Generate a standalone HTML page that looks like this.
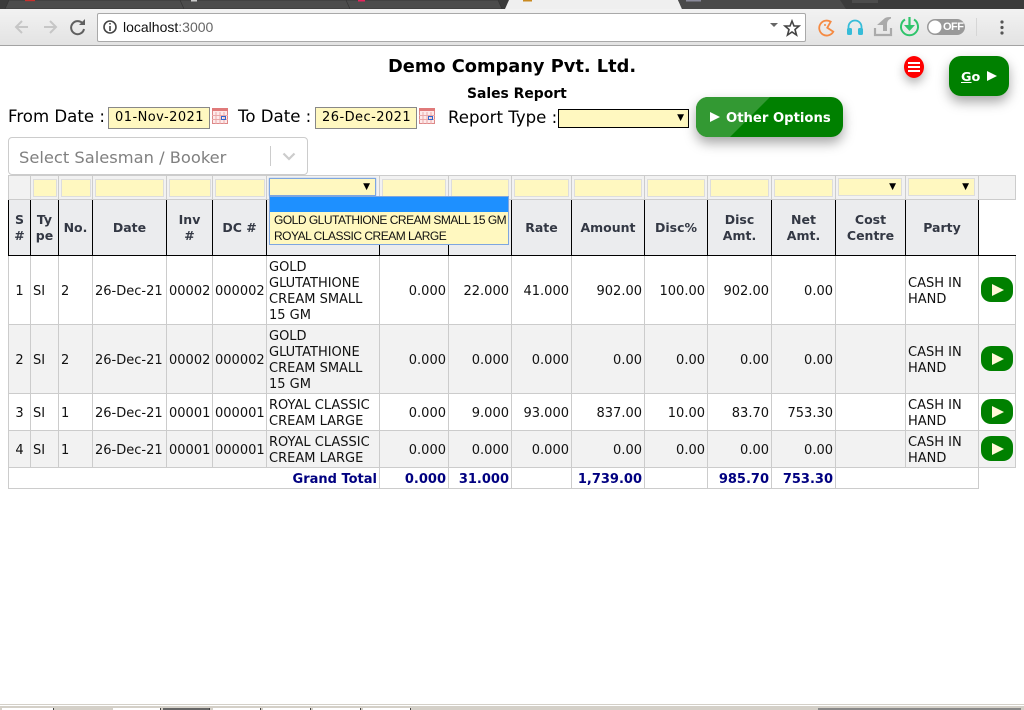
<!DOCTYPE html>
<html><head><meta charset="utf-8"><title>Sales Report</title>
<style>
html,body{margin:0;padding:0;background:#fff;width:1024px;height:710px;overflow:hidden}
body{font-family:"DejaVu Sans","Liberation Sans",sans-serif;color:#000;position:relative}
.a{position:absolute;white-space:nowrap}
table{position:absolute;left:8px;top:175px;border-collapse:collapse;table-layout:fixed;width:1008px;font-size:13px;color:#111}
td,th{border:1px solid #ccc;padding:0 2px;overflow:hidden;line-height:16px}
tr.f td{background:#f2f2f2;height:23px;padding:0}
tr.h th{background:#ebecee;border:1px solid #000;border-top:1px solid #ccc;height:55px;font-size:12.5px;color:#333844;padding:0 1px;font-weight:bold}
tr.h th.x{background:#fff;border:none;border-left:1px solid #000;border-bottom:1px solid #000}
tr.r td{height:64px;padding-top:4px}
tr.s td{height:32px;padding-top:4px}
tr.g td{background:#f2f2f2}
td.n{text-align:right}
tr.t td{height:18px;padding-top:2px;font-weight:bold;color:#000080;text-align:right;line-height:15px}
tr.t td.e{border:none;border-top:1px solid #ccc;background:#fff}
.fi{position:absolute;background:#fff8c0;border:1px solid #ddd;box-sizing:border-box;height:18px;top:179px}
.sa{position:absolute;top:4px;font-size:9px}
.pb{display:block;width:32px;height:25px;border-radius:10px;background:#008000;margin:0 auto;position:relative;top:-3px}
.pb i{position:absolute;left:11px;top:7px;border-left:12px solid #fff8d8;border-top:6px solid transparent;border-bottom:6px solid transparent}
.tab{position:absolute;top:708px;height:2px;background:#fff;border-right:1px solid #444;box-sizing:border-box}
</style></head><body>

<!-- browser chrome -->
<div class="a" style="left:0;top:0;width:1024px;height:9px;background:#3b3b3b"></div>
<svg class="a" style="left:0;top:0" width="1024" height="10">
<path d="M5 9 L9 0 H180 L184 9 Z M184 9 L180 0 H346 L350 9 Z M350 9 L346 0 H498 L502 9 Z" fill="#4c4c4c" stroke="#333" stroke-width="0.7"/>
<path d="M505 9 L509 0 H678 L682 9 Z" fill="#efefef"/>
<path d="M682 9 L678 0 H840 L846 9 Z" fill="#4a4a4a"/>
<rect x="852" y="0" width="26" height="3" fill="#4c4c4c"/>
<rect x="25" y="0" width="10" height="1.2" fill="#c9302c"/>
<rect x="191" y="0" width="6" height="1.5" fill="#ccc"/>
<rect x="358" y="0" width="7" height="1.5" fill="#e8245c"/>
<rect x="523" y="0" width="9" height="1.5" fill="#c98a20"/>
<rect x="686" y="0" width="15" height="1.5" fill="#8a8a9a"/>
</svg>
<div class="a" style="left:0;top:9px;width:1024px;height:36px;background:linear-gradient(#f2f2f2,#e3e3e3);border-bottom:1px solid #a3a3a3"></div>
<div class="a" style="left:97px;top:13px;width:707px;height:27px;background:#fff;border:1px solid #a9a9a9;border-radius:2px"></div>
<div class="a" style="left:123px;top:18px;font:14px/18px 'Liberation Sans',sans-serif;color:#111">localhost<span style="color:#666">:3000</span></div>
<svg class="a" style="left:0;top:9px" width="1024" height="36" fill="none">
<path d="M28 18 H16 M22 12 L16 18 L22 24" stroke="#c6c6c6" stroke-width="2"/>
<path d="M44 18 H56 M50 12 L56 18 L50 24" stroke="#c6c6c6" stroke-width="2"/>
<path d="M83 15 A6.5 6.5 0 1 0 84 20" stroke="#5f5f5f" stroke-width="2"/><path d="M85 10 V16 H79 Z" fill="#5f5f5f"/>
<circle cx="110" cy="18" r="6" stroke="#444" stroke-width="1.6"/><path d="M110 17 V22 M110 14 V15.5" stroke="#444" stroke-width="1.6"/>
<path d="M770 14 H778 L774 18 Z" fill="#666"/>
<path d="M792 12 L794 17 H799 L795 20.5 L796.5 26 L792 23 L787.5 26 L789 20.5 L785 17 H790 Z" stroke="#444" stroke-width="1.6"/>
<path d="M830.7 12.7 A7.5 7.5 0 1 0 833.3 22.7 L827.3 18.7 Z" stroke="#f58a42" stroke-width="1.8"/><circle cx="825" cy="16" r="1" fill="#f58a42"/>
<path d="M848.5 24 V18 A6.5 6.5 0 0 1 861.5 18 V24" stroke="#36bcd8" stroke-width="1.8"/><rect x="847" y="19" width="5" height="7" rx="1.5" fill="#36bcd8"/><rect x="858" y="19" width="5" height="7" rx="1.5" fill="#36bcd8"/>
<path d="M875 19 V26 H891 V19" stroke="#aaa" stroke-width="2.2"/><path d="M885 9 L877 16 H883 V22 H887 V15 Q887 11 891 9.5 V8 Q887 8 885 9 Z" fill="#aaa"/>
<path d="M905 10.5 A8.5 8.5 0 1 0 914 10.5" stroke="#2fc46b" stroke-width="2"/><path d="M909.5 8 V18" stroke="#2fc46b" stroke-width="2.2"/><path d="M904 16 H915 L909.5 22 Z" fill="#2fc46b"/>
<rect x="927" y="10" width="38" height="16" rx="8" fill="#999"/><circle cx="935" cy="18" r="6.5" fill="#fff"/>
<path d="M976.5 9 V27" stroke="#d6d6d6"/>
<circle cx="1002" cy="13" r="1.6" fill="#555"/><circle cx="1002" cy="18.5" r="1.6" fill="#555"/><circle cx="1002" cy="24" r="1.6" fill="#555"/>
</svg>
<div class="a" style="left:943px;top:20px;font:bold 11px/14px 'Liberation Sans',sans-serif;color:#fff;letter-spacing:-.5px">OFF</div>

<!-- headings -->
<div class="a" style="left:388px;top:56px;font-size:17.8px;line-height:21px;font-weight:bold">Demo Company Pvt. Ltd.</div>
<div class="a" style="left:467px;top:86px;font-size:13.9px;line-height:17px;font-weight:bold">Sales Report</div>

<!-- filter line -->
<div class="a" style="left:8px;top:107px;font-size:16.6px;line-height:20px">From Date :</div>
<div class="a" style="left:108px;top:107px;width:102px;height:22px;box-sizing:border-box;background:#fff8c0;border:1px solid #888;font-size:13px;letter-spacing:.45px;line-height:20px;padding-left:6px">01-Nov-2021</div>
<svg class="a" style="left:212px;top:108px" width="17" height="17" fill="none"><rect x=".5" y=".5" width="15" height="15" fill="#fdeaea" stroke="#d88"/><rect x="0" y="0" width="16" height="3" fill="#e07a7a"/><path d="M0 7.5H16M0 11.5H16M4 4V16M8 4V16M12 4V16" stroke="#eaa9a9"/><rect x="9.5" y="8.5" width="4" height="3" stroke="#36c"/></svg>
<div class="a" style="left:238px;top:107px;font-size:16.6px;line-height:20px">To Date :</div>
<div class="a" style="left:315px;top:107px;width:102px;height:22px;box-sizing:border-box;background:#fff8c0;border:1px solid #888;font-size:13px;letter-spacing:.45px;line-height:20px;padding-left:6px">26-Dec-2021</div>
<svg class="a" style="left:419px;top:108px" width="17" height="17" fill="none"><rect x=".5" y=".5" width="15" height="15" fill="#fdeaea" stroke="#d88"/><rect x="0" y="0" width="16" height="3" fill="#e07a7a"/><path d="M0 7.5H16M0 11.5H16M4 4V16M8 4V16M12 4V16" stroke="#eaa9a9"/><rect x="9.5" y="8.5" width="4" height="3" stroke="#36c"/></svg>
<div class="a" style="left:448px;top:108px;font-size:16.6px;line-height:20px">Report Type :</div>
<div class="a" style="left:558px;top:109px;width:131px;height:19px;box-sizing:border-box;background:#fff8c0;border:1px solid #000"><span class="sa" style="right:4px;top:3px">▼</span></div>

<!-- buttons -->
<div class="a" style="left:696px;top:97px;width:147px;height:40px;border-radius:12px;background:#008000;box-shadow:0 6px 12px rgba(0,0,0,.35);overflow:hidden">
<div class="a" style="left:0;top:0;width:0;height:0;border-top:40px solid #339933;border-right:40px solid transparent;margin-left:34px"></div>
<div class="a" style="left:0;top:0;width:34px;height:40px;background:#339933"></div>
<div class="a" style="left:14px;top:15px;border-left:10px solid #fff;border-top:5.5px solid transparent;border-bottom:5.5px solid transparent"></div>
<div class="a" style="left:30px;top:14px;color:#fff;font-weight:bold;font-size:13.2px;line-height:16px">Other Options</div>
</div>
<div class="a" style="left:949px;top:56px;width:60px;height:40px;border-radius:12px;background:#008000;box-shadow:0 6px 12px rgba(0,0,0,.35)">
<div class="a" style="left:12px;top:14px;color:#fff;font-weight:bold;font-size:12.8px;line-height:16px"><span style="text-decoration:underline">G</span>o</div>
<div class="a" style="left:38px;top:15px;border-left:10px solid #fff;border-top:5px solid transparent;border-bottom:5px solid transparent"></div>
</div>
<div class="a" style="left:904px;top:56px;width:20px;height:22px;border-radius:50%;background:#f00;box-shadow:0 5px 10px rgba(0,0,0,.3)">
<div class="a" style="left:4px;top:6px;width:12px;height:2px;background:#fff"></div>
<div class="a" style="left:4px;top:10px;width:12px;height:2px;background:#fff"></div>
<div class="a" style="left:4px;top:14px;width:12px;height:2px;background:#fff"></div>
</div>

<!-- salesman select -->
<div class="a" style="left:8px;top:137px;width:300px;height:38px;box-sizing:border-box;background:#fff;border:1px solid #ccc;border-radius:4px"></div>
<div class="a" style="left:19px;top:147px;font-size:16.3px;line-height:21px;color:#808080">Select Salesman / Booker</div>
<div class="a" style="left:270px;top:146px;width:1px;height:20px;background:#ccc"></div>
<svg class="a" style="left:282px;top:152px" width="14" height="9" fill="none"><path d="M1.5 1.5 L7 7 L12.5 1.5" stroke="#ccc" stroke-width="2.2"/></svg>

<!-- table -->
<table>
<colgroup><col style="width:22px"><col style="width:28px"><col style="width:34px"><col style="width:74px"><col style="width:46px"><col style="width:54px"><col style="width:113px"><col style="width:69px"><col style="width:63px"><col style="width:60px"><col style="width:73px"><col style="width:63px"><col style="width:64px"><col style="width:64px"><col style="width:70px"><col style="width:73px"><col style="width:37px"></colgroup>
<tr class="f"><td></td><td></td><td></td><td></td><td></td><td></td><td></td><td></td><td></td><td></td><td></td><td></td><td></td><td></td><td></td><td></td><td></td></tr>
<tr class="h"><th>S<br>#</th><th>Ty<br>pe</th><th>No.</th><th>Date</th><th>Inv<br>#</th><th>DC #</th><th>Item Name</th><th>Qty</th><th>Bonus</th><th>Rate</th><th>Amount</th><th>Disc%</th><th>Disc<br>Amt.</th><th>Net<br>Amt.</th><th>Cost<br>Centre</th><th>Party</th><th class="x"></th></tr>
<tr class="r"><td style="text-align:center">1</td><td>SI</td><td>2</td><td>26-Dec-21</td><td>00002</td><td>000002</td><td>GOLD GLUTATHIONE CREAM SMALL 15 GM</td><td class="n">0.000</td><td class="n">22.000</td><td class="n">41.000</td><td class="n">902.00</td><td class="n">100.00</td><td class="n">902.00</td><td class="n">0.00</td><td></td><td>CASH IN HAND</td><td><span class="pb"><i></i></span></td></tr>
<tr class="r g"><td style="text-align:center">2</td><td>SI</td><td>2</td><td>26-Dec-21</td><td>00002</td><td>000002</td><td>GOLD GLUTATHIONE CREAM SMALL 15 GM</td><td class="n">0.000</td><td class="n">0.000</td><td class="n">0.000</td><td class="n">0.00</td><td class="n">0.00</td><td class="n">0.00</td><td class="n">0.00</td><td></td><td>CASH IN HAND</td><td><span class="pb"><i></i></span></td></tr>
<tr class="s"><td style="text-align:center">3</td><td>SI</td><td>1</td><td>26-Dec-21</td><td>00001</td><td>000001</td><td>ROYAL CLASSIC CREAM LARGE</td><td class="n">0.000</td><td class="n">9.000</td><td class="n">93.000</td><td class="n">837.00</td><td class="n">10.00</td><td class="n">83.70</td><td class="n">753.30</td><td></td><td>CASH IN HAND</td><td><span class="pb"><i></i></span></td></tr>
<tr class="s g"><td style="text-align:center">4</td><td>SI</td><td>1</td><td>26-Dec-21</td><td>00001</td><td>000001</td><td>ROYAL CLASSIC CREAM LARGE</td><td class="n">0.000</td><td class="n">0.000</td><td class="n">0.000</td><td class="n">0.00</td><td class="n">0.00</td><td class="n">0.00</td><td class="n">0.00</td><td></td><td>CASH IN HAND</td><td><span class="pb"><i></i></span></td></tr>
<tr class="t"><td colspan="7">Grand Total</td><td>0.000</td><td>31.000</td><td></td><td>1,739.00</td><td></td><td>985.70</td><td>753.30</td><td colspan="2"></td><td class="e"></td></tr>
</table>

<!-- filter inputs -->
<div class="fi" style="left:33px;width:24px"></div>
<div class="fi" style="left:61px;width:30px"></div>
<div class="fi" style="left:95px;width:69px"></div>
<div class="fi" style="left:169px;width:42px"></div>
<div class="fi" style="left:215px;width:50px"></div>
<div class="fi" style="left:382px;width:64px"></div>
<div class="fi" style="left:451px;width:58px"></div>
<div class="fi" style="left:514px;width:55px"></div>
<div class="fi" style="left:574px;width:68px"></div>
<div class="fi" style="left:647px;width:58px"></div>
<div class="fi" style="left:710px;width:59px"></div>
<div class="fi" style="left:774px;width:59px"></div>
<div class="fi" style="left:838px;top:178px;width:64px"><span class="sa" style="right:5px;top:3px">▼</span></div>
<div class="fi" style="left:908px;top:178px;width:67px"><span class="sa" style="right:5px;top:3px">▼</span></div>

<!-- open dropdown -->
<div class="fi" style="left:269px;top:178px;width:107px;border:1px solid #7ea6e0;box-shadow:0 0 1px #7ea6e0"><span class="sa" style="right:5px;top:3px">▼</span></div>
<div class="a" style="left:269px;top:196px;width:240px;height:49px;box-sizing:border-box;background:#fff8c0;border:1px solid #7ea6e0;font:12px/16px 'Liberation Sans',sans-serif;color:#111;letter-spacing:-.5px">
<div style="height:15px;background:#1e90ff"></div>
<div style="padding-left:4px">GOLD GLUTATHIONE CREAM SMALL 15 GM</div>
<div style="padding-left:4px">ROYAL CLASSIC CREAM LARGE</div>
</div>

<!-- bottom bar -->
<div class="a" style="left:0;top:704px;width:1024px;height:1px;background:#d4d0c8"></div>
<div class="a" style="left:0;top:706px;width:1024px;height:4px;background:#d4d0c8"></div>
<div class="tab" style="left:2px;width:52px"></div>
<div class="tab" style="left:113px;width:48px"></div>
<div class="tab" style="left:163px;width:47px;background:#666"></div>
<div class="tab" style="left:213px;width:48px"></div>
<div class="tab" style="left:263px;width:48px"></div>
<div class="tab" style="left:313px;width:48px"></div>
<div class="tab" style="left:363px;width:48px"></div>
<div class="a" style="left:818px;top:708px;width:203px;height:2px;background:#888"></div>
</body></html>
